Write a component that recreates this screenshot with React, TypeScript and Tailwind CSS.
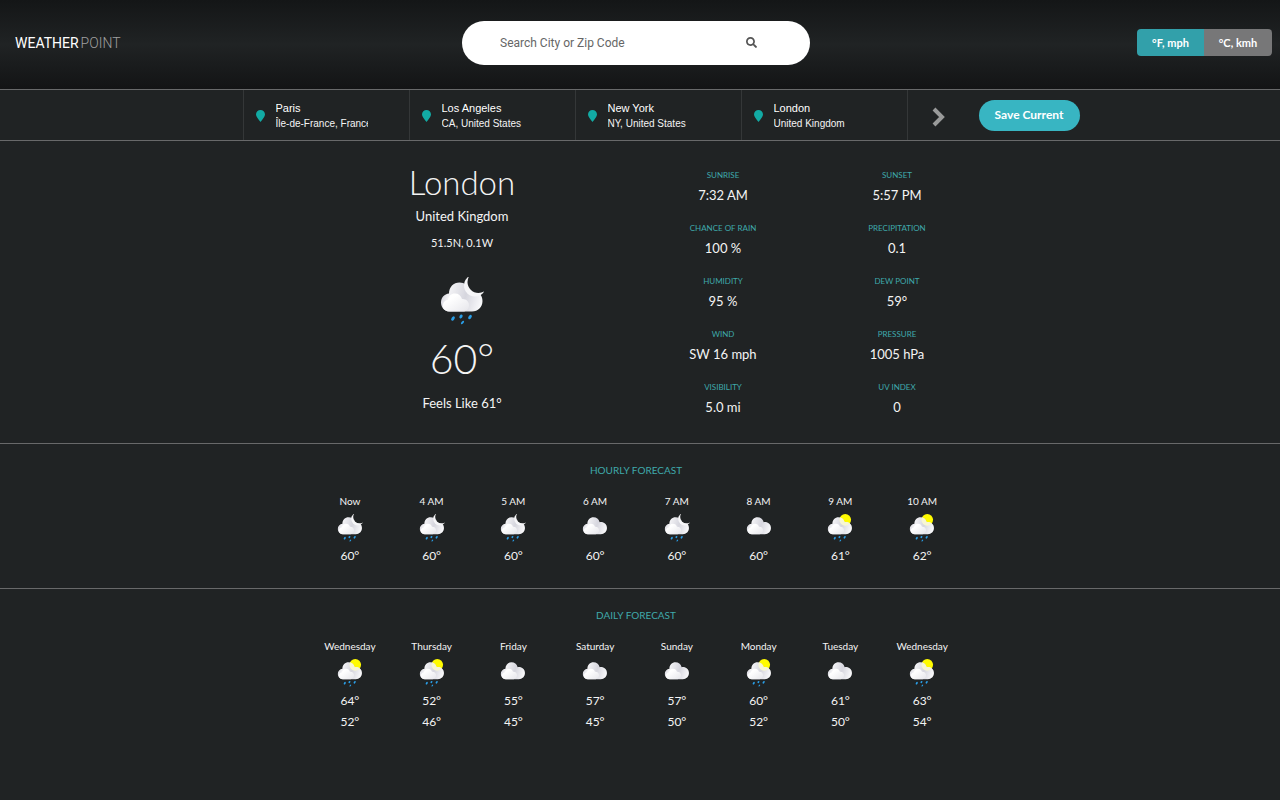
import { useId, useState } from "react";
import { FaSearch } from "react-icons/fa";

type Sky = "night-rain" | "day-rain" | "cloudy";

const places = [
  { city: "Paris", region: "Île-de-France, France" },
  { city: "Los Angeles", region: "CA, United States" },
  { city: "New York", region: "NY, United States" },
  { city: "London", region: "United Kingdom" },
];

const details = [
  ["Sunrise", "7:32 AM"],
  ["Sunset", "5:57 PM"],
  ["Chance of rain", "100 %"],
  ["Precipitation", "0.1"],
  ["Humidity", "95 %"],
  ["Dew point", "59°"],
  ["Wind", "SW 16 mph"],
  ["Pressure", "1005 hPa"],
  ["Visibility", "5.0 mi"],
  ["UV index", "0"],
];

const hourly: { label: string; sky: Sky; temps: string[] }[] = [
  { label: "Now", sky: "night-rain", temps: ["60°"] },
  { label: "4 AM", sky: "night-rain", temps: ["60°"] },
  { label: "5 AM", sky: "night-rain", temps: ["60°"] },
  { label: "6 AM", sky: "cloudy", temps: ["60°"] },
  { label: "7 AM", sky: "night-rain", temps: ["60°"] },
  { label: "8 AM", sky: "cloudy", temps: ["60°"] },
  { label: "9 AM", sky: "day-rain", temps: ["61°"] },
  { label: "10 AM", sky: "day-rain", temps: ["62°"] },
];

const daily: { label: string; sky: Sky; temps: string[] }[] = [
  { label: "Wednesday", sky: "day-rain", temps: ["64°", "52°"] },
  { label: "Thursday", sky: "day-rain", temps: ["52°", "46°"] },
  { label: "Friday", sky: "cloudy", temps: ["55°", "45°"] },
  { label: "Saturday", sky: "cloudy", temps: ["57°", "45°"] },
  { label: "Sunday", sky: "cloudy", temps: ["57°", "50°"] },
  { label: "Monday", sky: "day-rain", temps: ["60°", "52°"] },
  { label: "Tuesday", sky: "cloudy", temps: ["61°", "50°"] },
  { label: "Wednesday", sky: "day-rain", temps: ["63°", "54°"] },
];

const backCloud =
  "M20 69C9 69 2 61 2 51C2 41 9 34 18 33C18 20 27 11 39 11C49 11 57 17 60 28C74 26 85 35 85 48C85 60 76 69 64 69Z";
const frontCloud =
  "M18 69C11 69 6 64 6 57C6 51 10 46 16 46C17 38 22 33 30 33C37 33 42 37 44 44C52 43 58 49 58 56C58 64 53 69 46 69Z";

function WeatherIcon({ sky, className }: { sky: Sky; className: string }) {
  const id = useId().replace(/[^a-zA-Z0-9]/g, "");
  return (
    <svg viewBox="0 0 88 96" className={className} aria-hidden="true">
      <defs>
        <linearGradient id={`${id}b`} x1="0" y1="0.3" x2="1" y2="0.5">
          <stop offset="0" stopColor="#d0d0d9" />
          <stop offset="0.2" stopColor="#f2f2f5" />
          <stop offset="0.6" stopColor="#d6d6de" />
          <stop offset="1" stopColor="#f8f8fa" />
        </linearGradient>
        <linearGradient id={`${id}f`} x1="0" y1="0" x2="1" y2="1">
          <stop offset="0.3" stopColor="#ffffff" />
          <stop offset="1" stopColor="#e6e6eb" />
        </linearGradient>
        <clipPath id={`${id}c`}>
          <path d={backCloud} />
        </clipPath>
        <mask id={`${id}m`} maskUnits="userSpaceOnUse" x="0" y="0" width="88" height="96">
          <rect width="88" height="96" fill="white" />
          {sky === "night-rain" && <circle cx="77" cy="10" r="22" fill="black" />}
        </mask>
      </defs>
      {sky === "day-rain" && <circle cx="62" cy="20" r="20" fill="#fffb00" />}
      <g mask={`url(#${id}m)`}>
        <path d={backCloud} fill={`url(#${id}b)`} />
        {sky === "night-rain" && <circle cx="70" cy="17" r="22" fill="#f6f6f8" />}
      </g>
      {sky === "day-rain" && (
        <circle cx="62" cy="20" r="20" fill="#f7f6d2" clipPath={`url(#${id}c)`} />
      )}
      <path d={frontCloud} fill={`url(#${id}f)`} />
      {sky !== "cloudy" && (
        <g fill="#2a9fe8">
          <ellipse cx="26" cy="83" rx="3" ry="5" transform="rotate(32 26 83)" />
          <ellipse cx="42" cy="79" rx="3" ry="4" transform="rotate(32 42 79)" />
          <ellipse cx="60" cy="80" rx="3" ry="5" transform="rotate(32 60 80)" />
          <ellipse cx="45" cy="91" rx="2" ry="4" transform="rotate(45 45 91)" />
        </g>
      )}
    </svg>
  );
}

function Forecast({
  title,
  columns,
  className,
}: {
  title: string;
  columns: typeof hourly;
  className: string;
}) {
  return (
    <section className={`flex flex-col items-center pt-[18px] pr-2 text-center ${className}`}>
      <h2 className="text-[10px] leading-4 text-[#3fa9ab] uppercase">{title}</h2>
      <ul className="mt-[15px] grid w-full max-w-[654px] grid-cols-8">
        {columns.map((c, i) => (
          <li key={i} className="flex flex-col items-center">
            <span className="text-[10px] leading-4">{c.label}</span>
            <WeatherIcon sky={c.sky} className="mt-[5px] h-7 w-[26px]" />
            <div className="mt-[3px] flex flex-col">
              {c.temps.map((t, k) => (
                <span key={k} className="text-[12px] leading-[21px]">
                  {t}
                </span>
              ))}
            </div>
          </li>
        ))}
      </ul>
    </section>
  );
}

export default function App() {
  const [unit, setUnit] = useState("f");
  return (
    <div className="min-h-screen bg-[#202324] font-['Lato',sans-serif] text-[#f4f4f4] antialiased">
      <header className="grid h-[90px] grid-cols-[1fr_348px_1fr] items-center border-b border-[#68696a] bg-linear-to-b from-[#141617] via-[#202324] to-[#131415] pr-2 pb-1">
        <a href="#" className="flex gap-[2px] pl-[15px] font-['Roboto',sans-serif] text-[14px] leading-5">
          <span className="text-white">WEATHER</span>
          <span className="font-light text-[#a0a0a0]">POINT</span>
        </a>
        <form
          role="search"
          onSubmit={(e) => e.preventDefault()}
          className="flex h-11 items-center rounded-[22px] bg-white px-[38px]"
        >
          <input
            type="text"
            aria-label="Search City or Zip Code"
            placeholder="Search City or Zip Code"
            className="min-w-0 flex-1 bg-transparent font-['Roboto',sans-serif] text-[12px] text-[#333] outline-none placeholder:text-[#666]"
          />
          <button type="submit" aria-label="Search" className="mr-[15px] text-[#555]">
            <FaSearch size={11} />
          </button>
        </form>
        <div className="flex justify-self-end overflow-hidden rounded-[4px] text-[11px] leading-[27px] font-bold text-white">
          <button
            type="button"
            aria-pressed={unit === "f"}
            onClick={() => setUnit("f")}
            className="w-[67px] bg-[#32a0aa]"
          >
            °F, mph
          </button>
          <button
            type="button"
            aria-pressed={unit === "c"}
            onClick={() => setUnit("c")}
            className="w-[68px] bg-[#777778]"
          >
            °C, kmh
          </button>
        </div>
      </header>

      <nav
        aria-label="Saved places"
        className="flex h-[51px] items-center justify-center border-b border-[#68696a] pl-[42px]"
      >
        <ul className="grid h-full grid-cols-4 border-r border-[#343738] font-['Liberation_Sans',Arial,sans-serif]">
          {places.map((p) => (
            <li key={p.city} className="w-[166px] border-l border-[#343738]">
              <a href="#" className="flex h-full items-center gap-[11px] pt-px pl-3">
                <svg viewBox="0 0 18 24" className="h-3 w-[9px] shrink-0" aria-hidden="true">
                  <path d="M9 0a9 9 0 0 1 9 9c0 4-4 8-9 15C4 17 0 13 0 9a9 9 0 0 1 9-9Z" fill="#12aaa4" />
                </svg>
                <span className="flex w-[92px] flex-col overflow-hidden whitespace-nowrap">
                  <span className="text-[11px] leading-[15px] text-white">{p.city}</span>
                  <span className="text-[10px] leading-[15px]">{p.region}</span>
                </span>
              </a>
            </li>
          ))}
        </ul>
        <button type="button" aria-label="Next places" className="flex w-[71px] justify-center pr-[10px] pt-1">
          <svg viewBox="0 0 14 22" className="h-[22px] w-[14px]" fill="none" aria-hidden="true">
            <path d="M3 3l8 8-8 8" stroke="#999a9a" strokeWidth="4" />
          </svg>
        </button>
        <button
          type="button"
          className="h-[31px] w-[101px] rounded-full bg-[#38b5c2] text-[12px] font-bold text-white"
        >
          Save Current
        </button>
      </nav>

      <main>
        <section className="flex justify-center border-b border-[#68696a] pr-2 pt-[26px] pb-6">
          <div className="grid w-full max-w-[696px] grid-cols-2">
            <div className="flex flex-col items-center">
              <h1 className="-mt-[6px] mb-[2px] text-[33px] leading-[42px] font-light">London</h1>
              <p className="text-[13px] leading-[22px]">United Kingdom</p>
              <p className="mt-[6px] text-[11px] leading-5">51.5N, 0.1W</p>
              <WeatherIcon sky="night-rain" className="mt-6 h-12 w-11" />
              <p className="mt-[10px] text-[41px] leading-[48px] font-light">60°</p>
              <p className="mt-[10px] text-[13px] leading-5">Feels Like 61°</p>
            </div>
            <dl className="grid grid-cols-2 content-start gap-y-[13px] text-center">
              {details.map(([label, value]) => (
                <div key={label}>
                  <dt className="text-[8px] leading-4 text-[#3fa9ab] uppercase">{label}</dt>
                  <dd className="text-[13px] leading-6">{value}</dd>
                </div>
              ))}
            </dl>
          </div>
        </section>
        <Forecast title="Hourly Forecast" columns={hourly} className="border-b border-[#68696a] pb-[22px]" />
        <Forecast title="Daily Forecast" columns={daily} className="pb-6" />
      </main>
    </div>
  );
}
